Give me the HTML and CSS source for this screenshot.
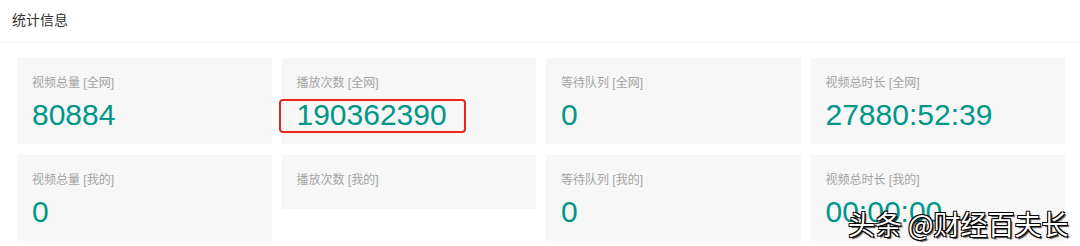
FILE: index.html
```html
<!DOCTYPE html>
<html lang="zh-CN">
<head>
<meta charset="utf-8">
<title>统计信息</title>
<link rel="stylesheet" href="styles.css">
</head>
<body>
<div class="panel">
  <div class="panel-header">统计信息</div>
  <div class="panel-body">
    <div class="grid">
      <div class="card">
        <div class="label">视频总量 [全网]</div>
        <div class="value">80884</div>
      </div>
      <div class="card">
        <div class="label">播放次数 [全网]</div>
        <div class="value">190362390</div>
        <div class="mark"></div>
      </div>
      <div class="card">
        <div class="label">等待队列 [全网]</div>
        <div class="value">0</div>
      </div>
      <div class="card">
        <div class="label">视频总时长 [全网]</div>
        <div class="value">27880:52:39</div>
      </div>
      <div class="card">
        <div class="label">视频总量 [我的]</div>
        <div class="value">0</div>
      </div>
      <div class="card">
        <div class="label">播放次数 [我的]</div>
        <div class="value"></div>
      </div>
      <div class="card">
        <div class="label">等待队列 [我的]</div>
        <div class="value">0</div>
      </div>
      <div class="card">
        <div class="label">视频总时长 [我的]</div>
        <div class="value">00:00:00</div>
      </div>
    </div>
  </div>
</div>
<div class="watermark">头条 @财经百夫长</div>
</body>
</html>
```
FILE: styles.css
```css
html, body {
  margin: 0;
  padding: 0;
  background: #ffffff;
  font-family: "Liberation Sans", Arial, "Noto Sans CJK SC", sans-serif;
  overflow: hidden;
}

.panel {
  background: #fff;
}

.panel-header {
  height: 42px;
  line-height: 39px;
  padding: 0 12px;
  font-size: 14px;
  color: #333;
  border-bottom: 1px solid #f3f3f3;
  font-family: "Noto Sans CJK SC", sans-serif;
}

.panel-body {
  padding: 15px 15px 0 17px;
}

.grid {
  display: grid;
  grid-template-columns: repeat(4, 1fr);
  gap: 11px 10px;
  align-items: start;
}

.card {
  position: relative;
  background: #f7f7f7;
  padding: 15px 15px 13px 15px;
}

.label {
  font-size: 12px;
  line-height: 20px;
  color: #a3a3a3;
  font-family: "Liberation Sans", Arial, "Noto Sans CJK SC", sans-serif;
}

.value {
  margin-top: 6px;
  font-size: 30px;
  line-height: 32px;
  color: #009688;
}

.mark {
  position: absolute;
  left: -3px;
  top: 41px;
  width: 187px;
  height: 34px;
  box-sizing: border-box;
  border: 2.5px solid #f0231d;
  border-radius: 4px;
}

.watermark {
  position: absolute;
  left: 848px;
  top: 206px;
  font-family: "Noto Sans CJK SC", sans-serif;
  font-size: 27px;
  line-height: 36px;
  color: #ffffff;
  white-space: nowrap;
  text-shadow:
    1px 1px 0 #000,
    -1px -1px 0 #000,
    1px -1px 0 #000,
    -1px 1px 0 #000,
    2px 2px 1px rgba(0,0,0,0.7);
}
```
